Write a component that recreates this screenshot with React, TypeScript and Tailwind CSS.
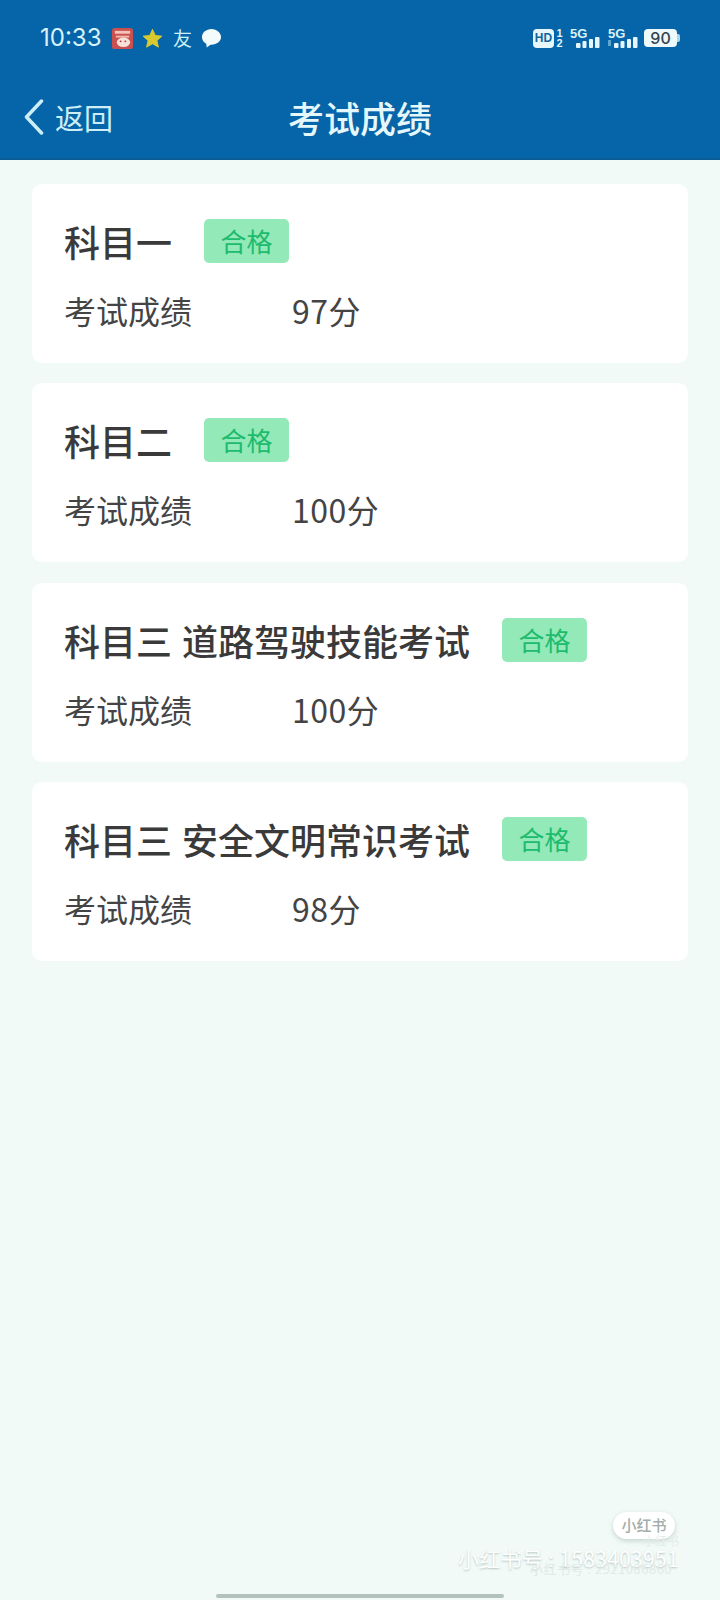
const CJK = { fontFamily: '"Noto Sans CJK SC", "Noto Sans", sans-serif' };

const exams = [
  { name: "科目一", score: "97分" },
  { name: "科目二", score: "100分" },
  { name: "科目三 道路驾驶技能考试", score: "100分" },
  { name: "科目三 安全文明常识考试", score: "98分" },
];

function Signal({ extra }: { extra?: boolean }) {
  return (
    <div className="relative h-[22px] w-[30px]">
      <span className="absolute left-0 top-[0px] font-['Liberation_Sans'] text-[13px] font-bold leading-[13px] text-[#d9f3f9]">
        5G
      </span>
      <svg viewBox="0 0 30 22" className="absolute inset-0 h-full w-full">
        {extra && <rect x="0" y="13" width="3" height="6" fill="#5ea5cf" />}
        <rect x="6" y="16" width="4.500" height="5" rx="1" fill="#e4f6fb" />
        <rect x="12.500" y="14" width="4" height="7" rx="1" fill="#e4f6fb" />
        <rect x="19" y="12" width="4" height="9" rx="1" fill="#e4f6fb" />
        <rect x="25" y="10" width="4.500" height="11" rx="1" fill="#e4f6fb" />
      </svg>
    </div>
  );
}

function StatusBar() {
  return (
    <div className="flex h-[76px] items-start justify-between pl-[40px] pr-[40px] pt-[23px]">
      <div className="flex h-[30px] items-center">
        <span className="w-[72px] font-['Inter'] text-[24px] leading-[30px] text-[#d8f3f8]">10:33</span>
        <svg viewBox="0 0 22 22" className="h-[21px] w-[21px]">
          <rect width="22" height="22" rx="3" fill="#c9504f" />
          <rect x="3" y="3" width="16" height="3" fill="#f4c3b8" />
          <rect x="4" y="8" width="14" height="2" fill="#f1b6a8" />
          <ellipse cx="12" cy="15" rx="7" ry="5" fill="#f6e2da" />
          <circle cx="9" cy="14" r="1" fill="#b33c3c" />
          <circle cx="14" cy="14" r="1" fill="#b33c3c" />
        </svg>
        <svg viewBox="0 0 24 24" className="ml-[9px] h-[21px] w-[21px]">
          <path
            d="M12 1.500l3.200 7 7.600.8-5.700 5 1.700 7.600L12 18l-6.800 3.900 1.700-7.600-5.700-5 7.600-.8z"
            fill="#d9c92f"
            stroke="#d9c92f"
            strokeLinejoin="round"
          />
        </svg>
        <span style={CJK} className="ml-[10px] w-[20px] text-[19px] leading-[22px] text-[#cdeef5]">
          友
        </span>
        <svg viewBox="0 0 22 22" className="ml-[8px] h-[21px] w-[21px]">
          <path d="M11 1C5.500 1 1 4.800 1 9.500c0 3 1.800 5.500 4.500 7l.5 4 4-3h1c5.500 0 10-3.600 10-8S16.500 1 11 1z" fill="#f3fbfc" />
        </svg>
      </div>
      <div className="flex h-[30px] items-center">
        <div className="flex h-[19px] w-[21px] items-center justify-center rounded-[4px] bg-[#e6f6fa] font-['Liberation_Sans'] text-[12px] font-bold leading-none text-[#10669f]">
          HD
        </div>
        <div className="ml-[2px] flex w-[7px] flex-col items-center font-['Liberation_Sans'] text-[11px] font-bold leading-[10px] text-[#dff5fa]">
          <span>1</span>
          <span>2</span>
        </div>
        <div className="ml-[7px]">
          <Signal />
        </div>
        <div className="ml-[8px]">
          <Signal extra />
        </div>
        <div className="ml-[6px] flex items-center">
          <div className="flex h-[18px] w-[33px] items-center justify-center rounded-[4px] bg-[#eef9fb] font-['Inter'] text-[16px] font-medium leading-none text-[#33434d]">
            90
          </div>
          <div className="h-[8px] w-[3px] rounded-r-[2px] bg-[#a9d7e8]" />
        </div>
      </div>
    </div>
  );
}

function NavBar() {
  return (
    <div className="relative flex h-[82px] items-center justify-center">
      <div className="absolute left-[24px] top-0 flex h-full items-center">
        <svg viewBox="0 0 20 36" className="h-[36px] w-[20px]" fill="none">
          <path d="M17.500 2L2.500 18l15 16" stroke="#cdeef6" strokeWidth="3.500" strokeLinecap="round" strokeLinejoin="round" />
        </svg>
        <span style={CJK} className="ml-[11px] text-[29px] leading-[36px] text-[#cdeef6]">
          返回
        </span>
      </div>
      <h1 style={CJK} className="text-[36px] font-medium leading-[44px] text-[#e4f7fa]">
        考试成绩
      </h1>
    </div>
  );
}

function ExamCard({ name, score }: { name: string; score: string }) {
  return (
    <div className="h-[179px] w-[656px] rounded-[10px] bg-white pl-[32px] pt-[35px]" style={CJK}>
      <div className="flex h-[44px] items-center">
        <span className="text-[36px] font-medium leading-[44px] text-[#3a3a3a] [word-spacing:2px]">{name}</span>
        <span className="ml-[32px] flex h-[44px] w-[85px] items-center justify-center rounded-[5px] bg-[#93e9b8] text-[26px] leading-none text-[#1dbb6e]">
          合格
        </span>
      </div>
      <div className="mt-[25px] flex h-[44px] items-center text-[32px] leading-[44px] text-[#444444]">
        <span className="w-[228px]">考试成绩</span>
        <span className="tracking-[0.5px]">{score}</span>
      </div>
    </div>
  );
}

export default function App() {
  return (
    <div className="relative h-[1600px] w-[720px] overflow-hidden bg-[#f1faf7]" style={CJK}>
      <header className="h-[160px] border-b-2 border-[#0a5c95] bg-[#0664a9]">
        <StatusBar />
        <NavBar />
      </header>
      <main className="flex flex-col gap-[20.33px] pl-[32px] pt-[24px]">
        {exams.map((e) => (
          <ExamCard key={e.name} name={e.name} score={e.score} />
        ))}
      </main>

      <div className="absolute left-[613px] top-[1512px] flex h-[27px] w-[62px] items-center justify-center rounded-full bg-white text-[15px] font-medium text-[#a3adab] shadow-[0_2px_5px_rgba(120,140,135,0.35)]">
        小红书
      </div>
      <div className="absolute left-[643px] top-[1533px] text-[12px] leading-[16px] text-[#e4edeb]">小红书</div>
      <div className="absolute left-[458px] top-[1543px] text-[21px] leading-[30px] tracking-[0.3px] text-white [text-shadow:0_1px_2px_rgba(130,150,145,0.55)]">
        小红书号 : 1583403951
      </div>
      <div className="absolute left-[530px] top-[1560px] text-[13px] leading-[18px] tracking-[0.5px] text-[#e0eae7]">
        小红书号 : 2921086860
      </div>
      <div className="absolute bottom-[2px] left-[216px] h-[4px] w-[288px] rounded-full bg-[#b4c2be]" />
    </div>
  );
}
